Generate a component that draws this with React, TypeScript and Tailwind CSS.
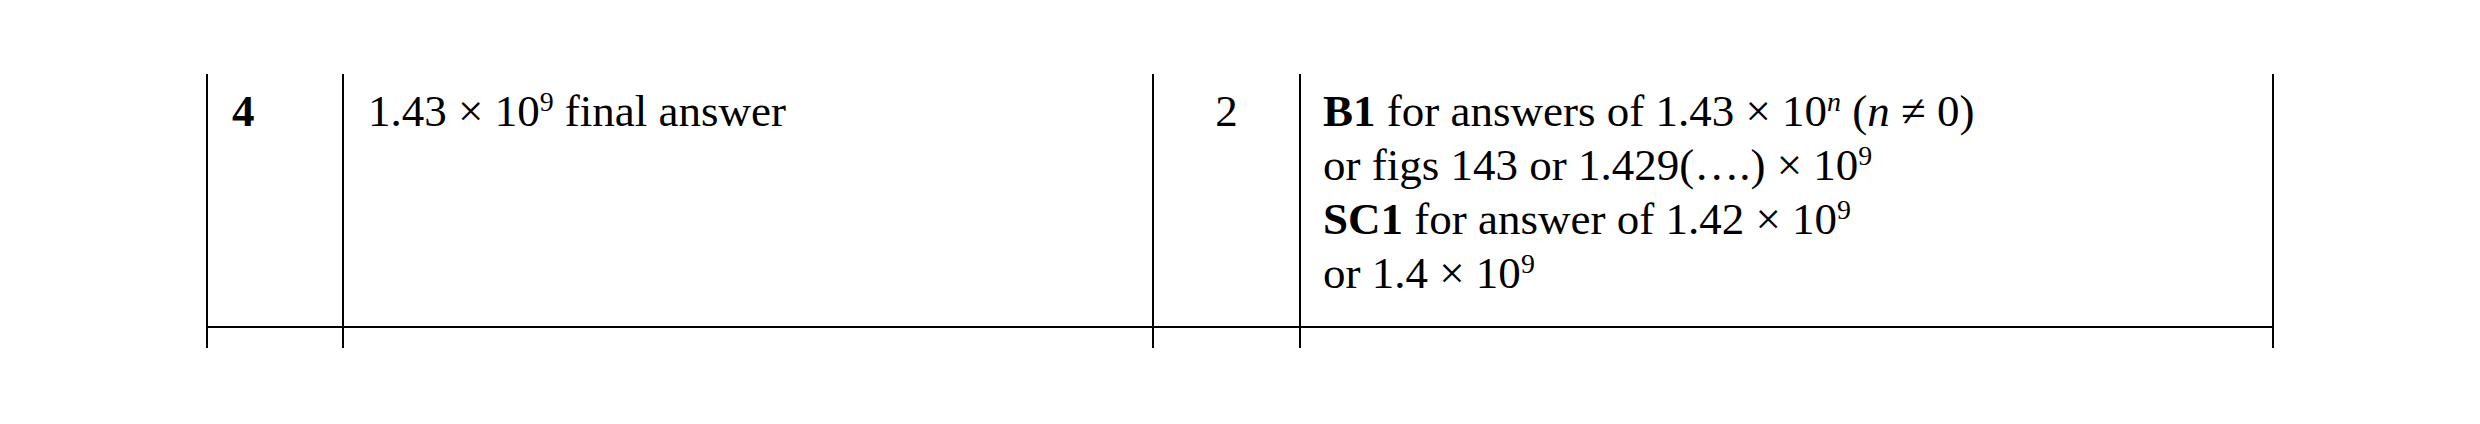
const Sup = ({ children }: { children: React.ReactNode }) => (
  <span className="relative -top-[0.55em] text-[0.62em] leading-none">{children}</span>
);

const App = () => {
  return (
    <main
      className="w-[2480px] h-[424px] bg-white text-black overflow-hidden pt-[74px] pl-[206px]"
      style={{ fontFamily: '"Liberation Serif", "Times New Roman", serif' }}
    >
      <div className="grid grid-cols-[136px_810px_147px_975px] text-[45px] leading-[54px]">
        {/* row 4 */}
        <div className="border-l-2 border-black h-[252px] pl-[24px] pt-[10px] font-bold">4</div>
        <div className="border-l-2 border-black pl-[24px] pt-[10px]">
          1.43 × 10<Sup>9</Sup> final answer
        </div>
        <div className="border-l-2 border-black pt-[10px] text-center">2</div>
        <div className="border-x-2 border-black pl-[22px] pt-[10px]">
          <div>
            <b>B1</b> for answers of 1.43 × 10<Sup><i>n</i></Sup> (<i>n</i> ≠ 0)
          </div>
          <div>
            or figs 143 or 1.429(….) × 10<Sup>9</Sup>
          </div>
          <div>
            <b>SC1</b> for answer of 1.42 × 10<Sup>9</Sup>
          </div>
          <div>
            or 1.4 × 10<Sup>9</Sup>
          </div>
        </div>

        {/* next row, cut off */}
        <div className="border-l-2 border-t-2 border-black h-[22px]" />
        <div className="border-l-2 border-t-2 border-black" />
        <div className="border-l-2 border-t-2 border-black" />
        <div className="border-x-2 border-t-2 border-black" />
      </div>
    </main>
  );
};

export default App;
